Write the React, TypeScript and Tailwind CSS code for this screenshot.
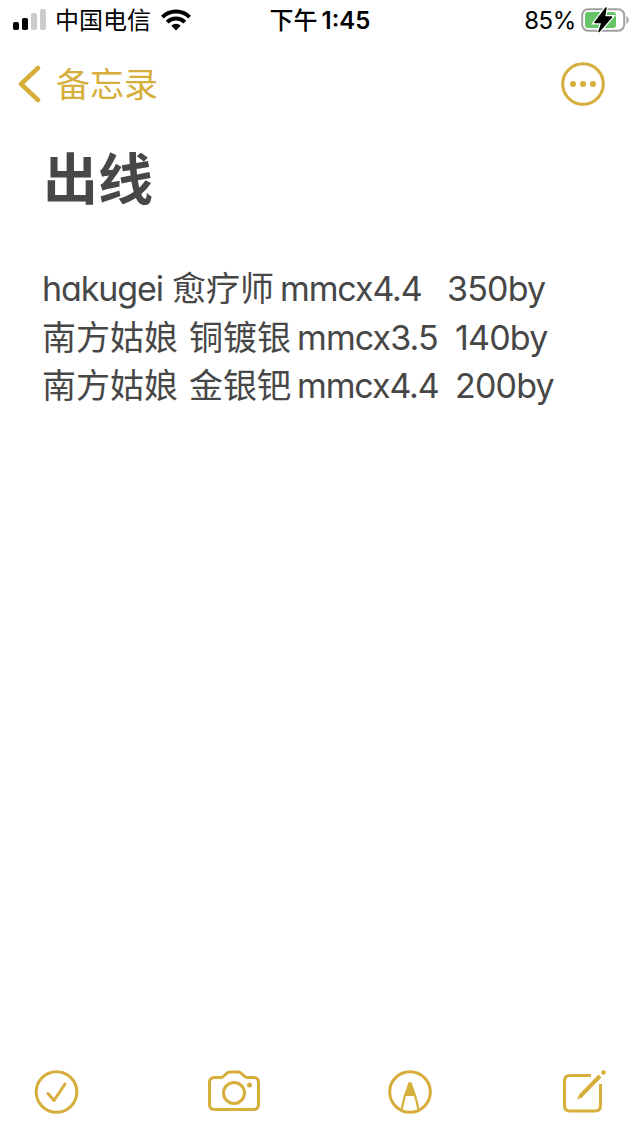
import type { ReactNode } from "react";

function Icon({ className, viewBox, children }: { className: string; viewBox: string; children: ReactNode }) {
  return (
    <svg
      className={className}
      viewBox={viewBox}
      fill="none"
      stroke="currentColor"
      strokeWidth="3"
      strokeLinecap="round"
      strokeLinejoin="round"
    >
      {children}
    </svg>
  );
}

// every part of a line keeps its own width
const lines = [
  [
    { text: "hakugei", style: "w-[130px] tracking-[-1.1px] [font-feature-settings:'cv11']" },
    { text: "愈疗师", style: "w-[108px]" },
    { text: "mmcx4.4", style: "w-[167px] tracking-[-1.1px]" },
    { text: "350by", style: "tracking-[-0.8px]" },
  ],
  [
    { text: "南方姑娘", style: "w-[147px]" },
    { text: "铜镀银", style: "w-[108px]" },
    { text: "mmcx3.5", style: "w-[158px] tracking-[-0.9px]" },
    { text: "140by", style: "tracking-[-0.8px]" },
  ],
  [
    { text: "南方姑娘", style: "w-[147px]" },
    { text: "金银钯", style: "w-[108px]" },
    { text: "mmcx4.4", style: "w-[158px] tracking-[-1.1px]" },
    { text: "200by", style: "tracking-[-0.8px]" },
  ],
];

export default function App() {
  return (
    <div className="w-[640px] h-[1136px] bg-white flex flex-col overflow-hidden font-[Inter,'Noto_Sans_CJK_SC',sans-serif]">
      {/* status bar */}
      <div className="h-10 shrink-0 grid grid-cols-3 text-black text-2xl leading-9 whitespace-nowrap">
        <div className="h-10 flex items-center pl-[13px]">
          <svg className="w-[33px] h-[22px]" viewBox="0 0 33 22">
            <rect x="0" y="13" width="6" height="8" rx="1.8" />
            <rect x="9" y="9" width="6" height="12" rx="1.8" />
            <rect x="18" y="4" width="6" height="17" rx="1.8" fill="#cccccc" />
            <rect x="27" y="0" width="6" height="21" rx="1.8" fill="#cccccc" />
          </svg>
          <span className="ml-[9px] w-[97px] pt-0.5">中国电信</span>
          <svg className="ml-[9px] w-[30px] h-[22px]" viewBox="0 0 30 22" fill="none" stroke="black" strokeWidth="4">
            <path d="M1.4 8.2a19.3 19.3 0 0 1 27.2 0" />
            <path d="M6.2 13.2a12.5 12.5 0 0 1 17.6 0" />
            <path d="M15 21.5l-4.7-4.8a6.8 6.8 0 0 1 9.4 0z" fill="black" stroke="none" />
          </svg>
        </div>
        <div className="h-10 flex items-center justify-center pt-0.5 font-semibold">
          <span className="font-medium">下午</span>
          <span className="ml-1">1:45</span>
        </div>
        <div className="h-10 flex items-center justify-end pr-[11px]">
          <span className="pt-0.5 tracking-[-0.4px]">85%</span>
          <svg className="ml-[5px] w-[48px] h-[26px]" viewBox="0 0 48 26">
            <rect x="1.2" y="2.2" width="42" height="21.6" rx="6" fill="none" stroke="#a0a0a0" strokeWidth="2" />
            <rect x="4" y="5" width="31" height="16" rx="3" fill="#65c466" />
            <path d="M45.5 9v8q2.2-1.500 2.200-4t-2.200-4z" fill="#a0a0a0" />
            <path d="M25 1L14 15.500h7L18 24.500L30.500 10h-7z" fill="white" stroke="white" strokeWidth="4" />
            <path d="M25 1L14 15.500h7L18 24.500L30.500 10h-7z" stroke="black" strokeWidth="1.500" strokeLinejoin="round" />
          </svg>
        </div>
      </div>

      {/* navigation */}
      <div className="h-[88px] shrink-0 flex items-center justify-between pl-[17px] pr-[35px] text-[#d6ae3b]">
        <button className="flex items-center">
          <svg className="w-6 h-[38px]" viewBox="0 0 24 38" fill="none" stroke="currentColor" strokeWidth="4.5">
            <path d="M21 3L4 19l17 16" strokeLinecap="round" strokeLinejoin="round" />
          </svg>
          <span className="ml-[15px] pt-0.5 text-[34px] leading-[48px]">备忘录</span>
        </button>
        <Icon className="w-11 h-11" viewBox="0 0 44 44">
          <circle cx="22" cy="22" r="20.300" />
          <g fill="currentColor" stroke="none">
            <circle cx="12" cy="22" r="3" />
            <circle cx="22" cy="22" r="3" />
            <circle cx="32" cy="22" r="3" />
          </g>
        </Icon>
      </div>

      {/* note */}
      <div className="flex-1 px-[42px] pt-[11px] text-[#474747]">
        <h1 className="pl-px text-[55px] leading-[80px] font-bold">出线</h1>
        <div className="mt-[46px] text-[34px] leading-[48.500px] whitespace-nowrap">
          {lines.map((line, i) => (
            <p key={i} className="flex">
              {line.map((part) => (
                <span key={part.text} className={part.style}>
                  {part.text}
                </span>
              ))}
            </p>
          ))}
        </div>
      </div>

      {/* toolbar */}
      <div className="h-[88px] shrink-0 flex items-center justify-between pl-[34px] pr-[34px] text-[#d6ae3b]">
        <Icon className="w-[45px] h-11" viewBox="0 0 44 44">
          <circle cx="22" cy="22" r="20.300" />
          <path d="M13.500 23.500l6 7L30.500 14" />
        </Icon>
        <Icon className="-ml-0.5 w-[52px] h-11" viewBox="0 0 52 44">
          <path d="M6.500 7.500h6q2 0 3.500-1.500l2.500-2.500q1.500-1.500 3.500-1.500h8q2 0 3.500 1.500L36 6q1.500 1.500 3.500 1.500h6q5 0 5 5v22q0 5-5 5h-39q-5 0-5-5v-22q0-5 5-5z" />
          <circle cx="26" cy="23" r="10.500" />
          <circle cx="41.500" cy="15" r="2.500" fill="currentColor" stroke="none" />
        </Icon>
        <Icon className="-ml-0.5 w-11 h-11" viewBox="0 0 44 44">
          <circle cx="22" cy="22" r="20.300" />
          <path d="M13.500 39.500l3.500-14.500h10l3.500 14.500" strokeWidth="2.200" />
          <path d="M17 25l4-12h2l4 12z" fill="currentColor" strokeWidth="1.500" />
        </Icon>
        <Icon className="w-[43px] h-11" viewBox="0 0 43 44">
          <path d="M28 5.500H7q-5.500 0-5.500 5.500v24.500q0 5.500 5.500 5.500h25q5.500 0 5.500-5.500V14" strokeLinecap="butt" />
          <path d="M17.500 26L37 6" strokeWidth="4" strokeLinecap="butt" />
          <path d="M17.200 24.200l-2.500 4.500 4.700-2z" fill="currentColor" strokeWidth="1" />
          <circle cx="40.500" cy="2.500" r="2.300" fill="currentColor" stroke="none" />
        </Icon>
      </div>
    </div>
  );
}
